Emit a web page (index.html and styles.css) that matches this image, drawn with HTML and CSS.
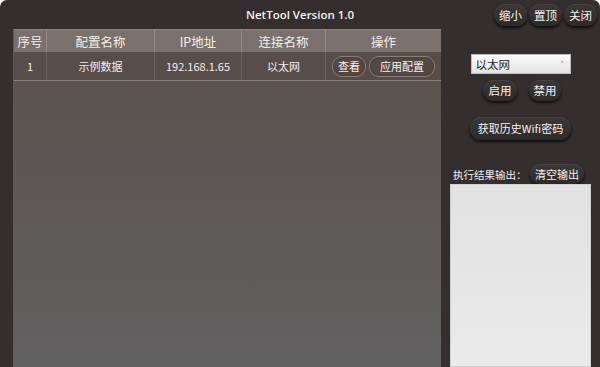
FILE: index.html
```html
<!DOCTYPE html>
<html lang="zh">
<head>
<meta charset="utf-8">
<title>NetTool</title>
<link rel="stylesheet" href="styles.css">
</head>
<body>
<div class="window">
  <div class="titlebar">
    <div class="title">NetTool Version 1.0</div>
    <div class="winbtns">
      <button class="btn small">缩小</button>
      <button class="btn small">置顶</button>
      <button class="btn small">关闭</button>
    </div>
  </div>
  <div class="main">
    <div class="panel">
      <div class="row head">
        <div class="cell">序号</div>
        <div class="cell">配置名称</div>
        <div class="cell">IP地址</div>
        <div class="cell">连接名称</div>
        <div class="cell">操作</div>
      </div>
      <div class="row data">
        <div class="cell">1</div>
        <div class="cell">示例数据</div>
        <div class="cell">192.168.1.65</div>
        <div class="cell">以太网</div>
        <div class="cell ops">
          <button class="tbtn">查看</button>
          <button class="tbtn">应用配置</button>
        </div>
      </div>
      <div class="body"></div>
    </div>
    <div class="side">
      <div class="select"><span>以太网</span><span class="arrow">˅</span></div>
      <div class="pair">
        <button class="btn">启用</button>
        <button class="btn">禁用</button>
      </div>
      <button class="btn wide">获取历史Wifi密码</button>
      <div class="outhead">
        <span class="label">执行结果输出：</span>
        <button class="btn clear">清空输出</button>
      </div>
      <div class="output"></div>
    </div>
  </div>
</div>
</body>
</html>
```
FILE: styles.css
```css
html, body {
  margin: 0;
  padding: 0;
  background: #ffffff;
}
body {
  width: 600px;
  height: 367px;
  overflow: hidden;
  font-family: "Noto Sans CJK SC", "Noto Sans", sans-serif;
}
.window {
  width: 600px;
  height: 367px;
  background: #342e2e;
  border-radius: 7px 7px 0 0;
  display: flex;
  flex-direction: column;
  overflow: hidden;
}
.titlebar {
  height: 29px;
  position: relative;
  display: flex;
  align-items: center;
  justify-content: center;
  flex: none;
}
.title {
  color: #f4f0ee;
  font-family: "Open Sans", "Noto Sans", sans-serif;
  font-size: 11.5px;
  font-weight: 600;
}
.winbtns {
  position: absolute;
  right: 3px;
  top: 4px;
  display: flex;
  gap: 2px;
}
.btn {
  font-family: "Noto Sans CJK SC", sans-serif;
  color: #f2f2f2;
  background: linear-gradient(#3d3838, #2f2a2a);
  border: none;
  border-radius: 11px;
  box-shadow: 0 2px 3px rgba(0, 0, 0, 0.75), inset 0 1px 0 rgba(255,255,255,0.06);
  font-size: 11.5px;
  padding: 0;
  height: 21px;
  line-height: 21px;
  cursor: default;
}
.btn.small {
  width: 33px;
  height: 22px;
}
.main {
  flex: 1;
  display: flex;
  min-height: 0;
}
.panel {
  margin-left: 13px;
  width: 428px;
  display: flex;
  flex-direction: column;
  border-top: 1px solid #8a817c;
  border-left: 1px solid #5f5855;
  box-sizing: border-box;
}
.row {
  display: grid;
  grid-template-columns: 33px 108px 87px 84px 115px;
}
.row .cell {
  display: flex;
  align-items: center;
  justify-content: center;
  color: #f3efed;
  border-right: 1px solid #8c837e;
  box-sizing: border-box;
}
.row .cell:last-child {
  border-right: none;
}
.head {
  height: 22px;
  background: #7a716c;
  font-size: 12.5px;
}
.head .cell {
  border-right-color: #968d88;
}
.data {
  height: 28px;
  background: #574d49;
  font-size: 11px;
  border-bottom: 1px solid #8a807b;
}
.data .cell {
  border-right-color: #6c625e;
}
.ops {
  gap: 3px;
}
.tbtn {
  font-family: "Noto Sans CJK SC", sans-serif;
  background: #544844;
  color: #f5f2f0;
  border: 1px solid #8d7e79;
  border-radius: 10px;
  font-size: 11px;
  height: 21px;
  padding: 0;
  box-shadow: inset 0 0 2px rgba(0,0,0,0.4);
}
.tbtn:first-child { width: 34px; }
.tbtn:last-child { width: 66px; }
.body {
  flex: 1;
  background: linear-gradient(#5a5350, #626161);
}
.side {
  flex: 1;
  display: flex;
  flex-direction: column;
  align-items: center;
  padding-top: 25px;
}
.select {
  width: 100px;
  height: 20px;
  box-sizing: border-box;
  background: linear-gradient(#fafafa, #e3e3e3);
  border: 1px solid #bdbdbd;
  display: flex;
  align-items: center;
  justify-content: space-between;
  padding: 0 6px 0 4px;
  font-size: 11.5px;
  color: #1a1a1a;
}
.arrow {
  font-size: 10px;
  color: #555;
}
.pair {
  display: flex;
  gap: 12px;
  margin-top: 6px;
  margin-left: 3px;
}
.pair .btn {
  width: 34px;
}
.pair .btn:last-child { width: 32px; }
.btn.wide {
  margin-top: 16px;
  width: 101px;
  height: 23px;
  font-size: 11px;
}
.outhead {
  margin-top: 24px;
  width: 100%;
  display: flex;
  align-items: center;
  box-sizing: border-box;
  padding-left: 12px;
}
.label {
  color: #f0eeee;
  font-size: 10.5px;
  width: 77px;
}
.btn.clear {
  width: 54px;
  height: 20px;
  line-height: 20px;
  font-size: 11px;
}
.output {
  width: 141px;
  flex: 1;
  background: linear-gradient(#e2e2e2, #eaeaea);
  border: 1px solid #cfcfcf;
  box-sizing: border-box;
}
```
